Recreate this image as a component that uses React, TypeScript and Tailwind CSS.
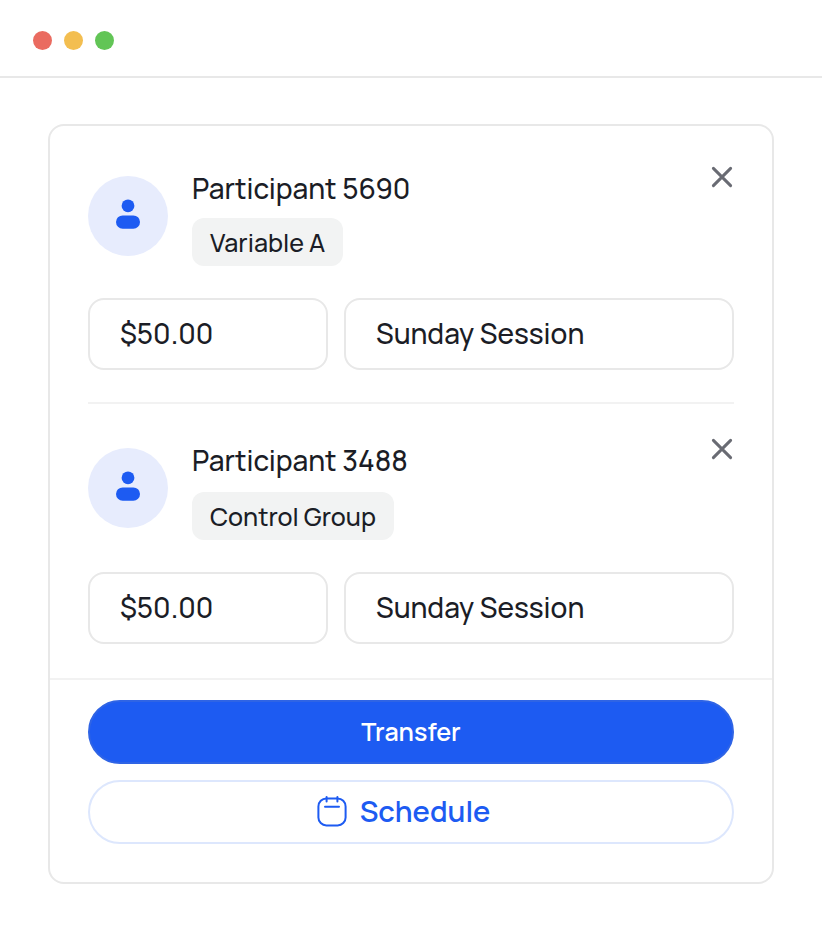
type ParticipantProps = {
  name: string;
  group: string;
  amount: string;
  session: string;
  groupSpacing: string;
};

function PersonIcon() {
  return (
    <svg viewBox="0 0 24 30" className="h-[30px] w-6" fill="#1d5bf2" aria-hidden="true">
      <circle cx="12" cy="6.8" r="6.4" />
      <rect x="0" y="16.4" width="24" height="13.4" rx="6.7" />
    </svg>
  );
}

function CloseIcon() {
  return (
    <svg viewBox="0 0 24 24" className="size-6" fill="none" stroke="#696b73" strokeWidth="3" strokeLinecap="round" aria-hidden="true">
      <path d="M3.4 3.4 20.6 20.6M20.6 3.4 3.4 20.6" />
    </svg>
  );
}

function CalendarIcon() {
  return (
    <svg viewBox="0 0 32 32" className="size-8" fill="none" stroke="#1d5bf2" strokeWidth="2" strokeLinecap="round" aria-hidden="true">
      <rect x="2.4" y="2.4" width="27.2" height="27" rx="8" />
      <path d="M10.6 1v4.4M21.4 1v4.4M9 10.8h14" />
    </svg>
  );
}

function Participant({ name, group, amount, session, groupSpacing }: ParticipantProps) {
  const field =
    "h-[72px] min-w-0 rounded-2xl border-2 border-[#e8e8e8] bg-white px-[30px] pb-0.5 text-[28px] font-medium text-[#1b1d26] outline-none focus:border-[#1d5bf2]";
  return (
    <section>
      <div className="flex items-start gap-6">
        <div className="mt-2 flex size-20 shrink-0 items-center justify-center rounded-full bg-[#e7ecfd] pb-1">
          <PersonIcon />
        </div>
        <div className="min-w-0 flex-1">
          <h2 className="text-[28px] leading-10 font-medium">{name}</h2>
          <span className={`flex h-12 w-fit items-center rounded-xl bg-[#f2f3f3] px-[18px] pt-0.5 text-[25px] font-medium ${groupSpacing}`}>
            {group}
          </span>
        </div>
        <button type="button" aria-label={`Remove ${name}`} className="-mt-[3px] cursor-pointer">
          <CloseIcon />
        </button>
      </div>
      <div className="mt-8 flex gap-4">
        <input aria-label={`Amount for ${name}`} defaultValue={amount} className={`${field} w-60`} />
        <input aria-label={`Session for ${name}`} defaultValue={session} className={`${field} flex-1`} />
      </div>
    </section>
  );
}

export default function App() {
  return (
    <div className="min-h-screen bg-white font-['Manrope','Inter',sans-serif] text-[#1b1d26]">
      <header className="flex items-center gap-3 border-b-2 border-[#e8e8e8] px-[33px] pt-[31px] pb-[26px]">
        <span className="size-[19px] rounded-full bg-[#ea6b60]" />
        <span className="size-[19px] rounded-full bg-[#f3be50]" />
        <span className="size-[19px] rounded-full bg-[#62c556]" />
      </header>
      <main className="px-12 py-[46px]">
        <div className="rounded-2xl border-2 border-[#e8e8e8]">
          <div className="px-[38px] pt-[42px] pb-[34px]">
            <Participant name="Participant 5690" group="Variable A" amount="$50.00" session="Sunday Session" groupSpacing="mt-2.5" />
            <hr className="mt-8 mb-9 border-t-2 border-[#f2f2f2]" />
            <Participant name="Participant 3488" group="Control Group" amount="$50.00" session="Sunday Session" groupSpacing="mt-3" />
          </div>
          <footer className="flex flex-col gap-4 border-t-2 border-[#f2f2f2] px-[38px] pt-5 pb-[38px]">
            <button type="button" className="h-16 cursor-pointer rounded-full border-2 border-[#2f64e5] bg-[#1d5bf2] text-[25px] font-semibold text-white">
              Transfer
            </button>
            <button type="button" className="flex h-16 cursor-pointer items-center justify-center gap-3 rounded-full border-2 border-[#dde7fd] pr-4 text-[29px] font-semibold text-[#1d5bf2]">
              <CalendarIcon />
              Schedule
            </button>
          </footer>
        </div>
      </main>
    </div>
  );
}
